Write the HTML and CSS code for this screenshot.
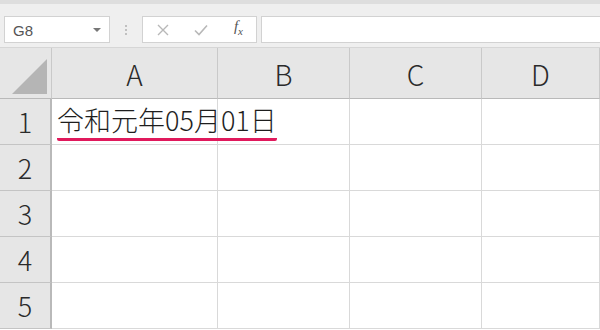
FILE: index.html
```html
<!DOCTYPE html>
<html lang="ja">
<head>
<meta charset="UTF-8">
<link rel="stylesheet" href="styles.css">
</head>
<body>

<div class="toolbar">
    <div class="name-box">
        <span>G8</span>
        <span class="caret"></span>
    </div>
    <div class="grip">
        <span></span><span></span><span></span>
    </div>
    <div class="fx-buttons">
        <svg class="btn-icon" viewBox="0 0 12 12" width="12" height="12">
            <path d="M1 1 L11 11 M11 1 L1 11" stroke="#b8b8b8" stroke-width="1.4" fill="none"/>
        </svg>
        <svg class="btn-icon" viewBox="0 0 14 12" width="14" height="12">
            <path d="M1 6.5 L5 10.5 L13 1.5" stroke="#b8b8b8" stroke-width="1.6" fill="none"/>
        </svg>
        <span class="fx">f<sub>x</sub></span>
    </div>
    <div class="formula-bar"></div>
</div>

<div class="sheet">
    <div class="corner"><span class="corner-mark"></span></div>
    <div class="col-head">A</div>
    <div class="col-head">B</div>
    <div class="col-head">C</div>
    <div class="col-head">D</div>

    <div class="row-head">1</div>
    <div class="cell"><span class="value">令和元年05月01日</span></div>
    <div class="cell"></div>
    <div class="cell"></div>
    <div class="cell"></div>

    <div class="row-head">2</div>
    <div class="cell"></div>
    <div class="cell"></div>
    <div class="cell"></div>
    <div class="cell"></div>

    <div class="row-head">3</div>
    <div class="cell"></div>
    <div class="cell"></div>
    <div class="cell"></div>
    <div class="cell"></div>

    <div class="row-head">4</div>
    <div class="cell"></div>
    <div class="cell"></div>
    <div class="cell"></div>
    <div class="cell"></div>

    <div class="row-head">5</div>
    <div class="cell"></div>
    <div class="cell"></div>
    <div class="cell"></div>
    <div class="cell"></div>
</div>

</body>
</html>
```

FILE: styles.css
```css
body {
    margin: 0;
    width: 600px;
    height: 330px;
    overflow: hidden;
    background: #fff;
    font-family: "Noto Sans CJK JP", "Noto Sans", sans-serif;
    color: #333;
}

/* formula bar strip */
.toolbar {
    height: 48px;
    box-sizing: border-box;
    padding: 12px 0 4px 4px;
    display: flex;
    align-items: stretch;
    background: #efefef;
    border-top: 4px solid #dedede;
    border-bottom: 1px solid #d6d6d6;
}

.name-box {
    width: 106px;
    box-sizing: border-box;
    display: flex;
    align-items: center;
    justify-content: space-between;
    padding: 2px 8px 0 8px;
    background: #fff;
    border: 1px solid #d2d2d2;
    font-family: "Liberation Sans", "Noto Sans", sans-serif;
    font-size: 15px;
    color: #555;
}

.caret {
    width: 0;
    height: 0;
    margin-top: -2px;
    border-left: 4px solid transparent;
    border-right: 4px solid transparent;
    border-top: 4px solid #777;
}

.grip {
    width: 32px;
    display: flex;
    flex-direction: column;
    align-items: center;
    justify-content: center;
    gap: 2px;
}

.grip span {
    width: 2px;
    height: 2px;
    border-radius: 50%;
    background: #b0b0b0;
}

.fx-buttons {
    width: 115px;
    box-sizing: border-box;
    display: flex;
    align-items: center;
    justify-content: space-between;
    padding: 0 13px 0 14px;
    background: #fff;
    border: 1px solid #d2d2d2;
}

.fx {
    font-family: "Liberation Serif", serif;
    font-style: italic;
    font-size: 15px;
    color: #555;
    margin-top: -4px;
}

.fx sub {
    font-size: 11px;
}

.formula-bar {
    flex: 1;
    margin-left: 4px;
    background: #fff;
    border: 1px solid #d2d2d2;
    border-right: none;
}

/* grid */
.sheet {
    display: grid;
    grid-template-columns: 52px 166px 132px 132px 1fr;
    grid-template-rows: 51px repeat(5, 46px);
}

.corner {
    background: #e6e6e6;
    border-right: 1px solid #c9c9c9;
    border-bottom: 1px solid #b9b9b9;
    display: flex;
    align-items: flex-end;
    justify-content: flex-end;
    padding: 0 4px 4px 0;
}

.corner-mark {
    width: 0;
    height: 0;
    border-left: 35px solid transparent;
    border-bottom: 35px solid #b5b5b5;
}

.col-head {
    background: #e6e6e6;
    border-right: 1px solid #c9c9c9;
    border-bottom: 1px solid #b9b9b9;
    display: flex;
    align-items: center;
    justify-content: center;
    padding-top: 2px;
    font-size: 28px;
    font-weight: 300;
    color: #2a2a2a;
}

.row-head {
    background: #e6e6e6;
    border-right: 2px solid #b9b9b9;
    border-bottom: 1px solid #c4c4c4;
    display: flex;
    align-items: center;
    justify-content: center;
    font-size: 27px;
    font-weight: 300;
    color: #2a2a2a;
}

.cell {
    border-right: 1px solid #d9d9d9;
    border-bottom: 1px solid #d9d9d9;
    display: flex;
    align-items: center;
    overflow: visible;
    white-space: nowrap;
}

.value {
    position: relative;
    z-index: 1;
    margin-left: 5px;
    font-size: 27px;
    font-weight: 300;
    color: #1e1e1e;
    border-bottom: 3px solid #e0195c;
    border-radius: 2px;
    line-height: 34px;
    padding-bottom: 1px;
}
```
